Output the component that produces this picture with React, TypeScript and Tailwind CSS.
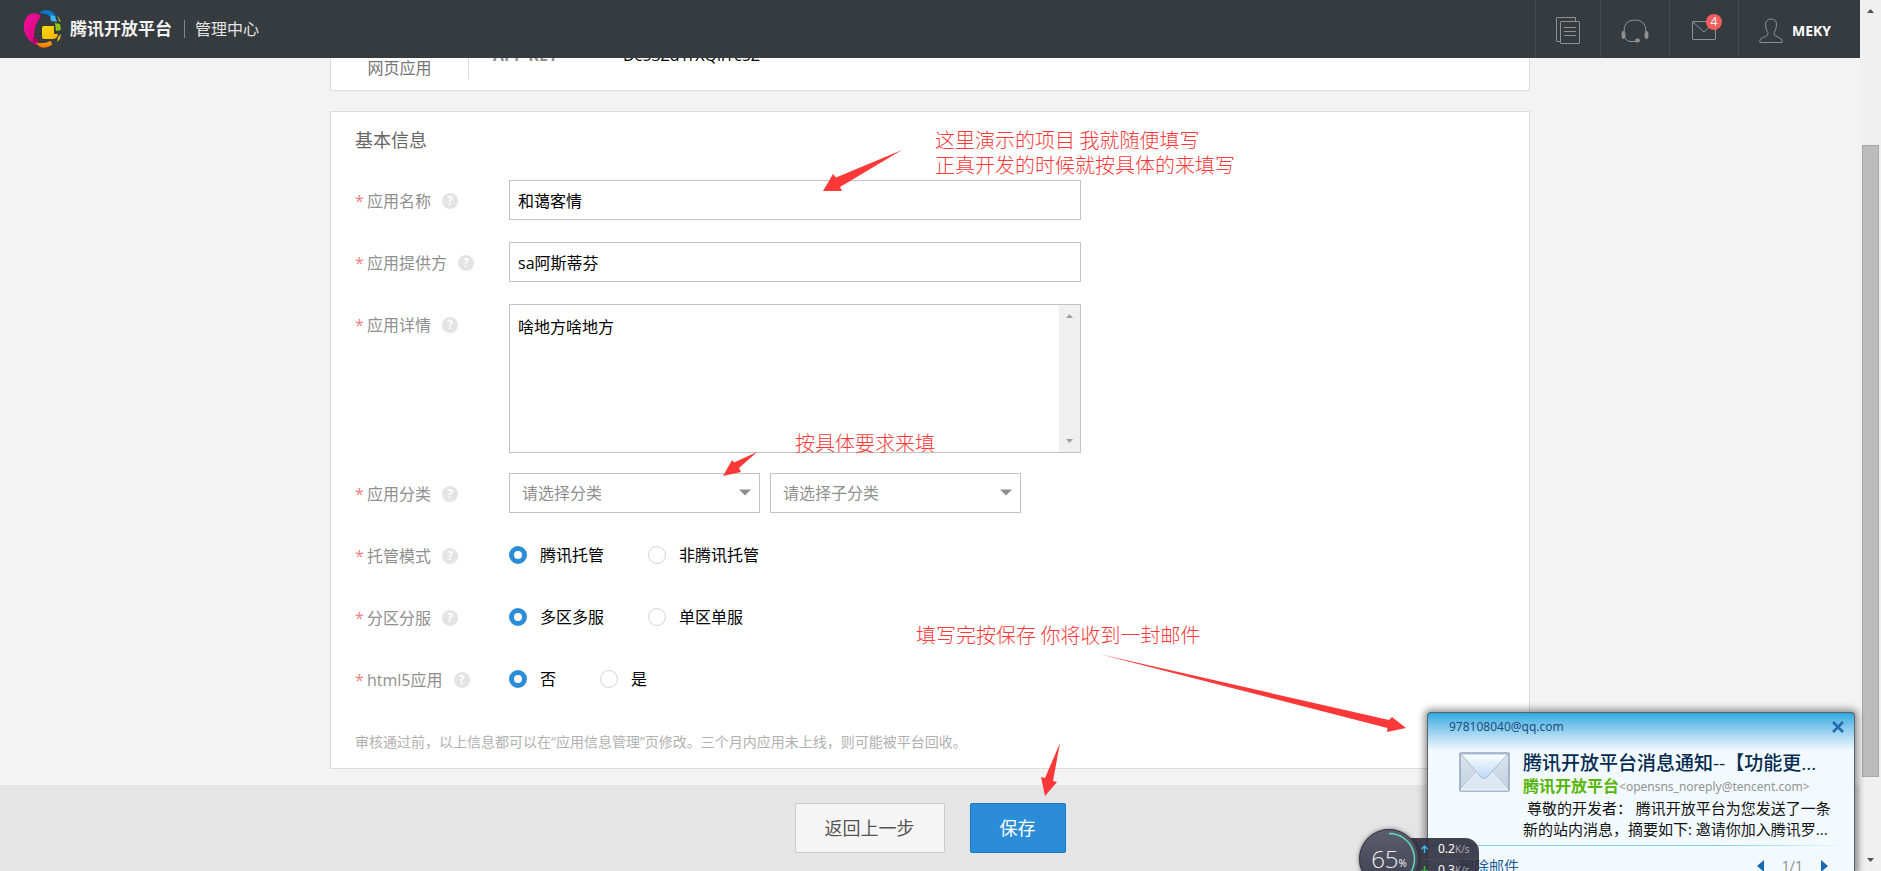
import React from "react";

const FONT = "font-['Open_Sans','Noto_Sans_CJK_SC',sans-serif]";

function Logo() {
  return (
    <svg className="h-10 w-10 shrink-0" viewBox="0 0 40 40" aria-hidden="true">
      <defs>
        <linearGradient id="pink" x1="0" y1="0" x2="1" y2="1">
          <stop offset="0" stopColor="#f0109a" />
          <stop offset="1" stopColor="#d8007f" />
        </linearGradient>
        <linearGradient id="gold" x1="0" y1="0" x2="1" y2="1">
          <stop offset="0" stopColor="#ffdb00" />
          <stop offset="1" stopColor="#f9b100" />
        </linearGradient>
        <linearGradient id="amber" x1="0" y1="0" x2="0" y2="1">
          <stop offset="0" stopColor="#ffae0a" />
          <stop offset="1" stopColor="#ee6d00" />
        </linearGradient>
      </defs>
      <path d="M13 4.500L17 7Q10 15 10 29L15 34L12 36Q2 31 0 21Q-1 10 6 5Q10 4 13 4.500Z" fill="url(#pink)" />
      <path d="M9 28L16 31L9 35Z" fill="#a5005c" />
      <path d="M15 4Q22-2 30 4L32 8L26 7Q21 4 15 4Z" fill="#0878ce" />
      <path d="M26 6L31 7L33 13L27 12Z" fill="#3fb2f2" />
      <path d="M33 6L37 13L35 12Z" fill="#d3d321" />
      <path d="M31 14L36 15L37 21L32 22Z" fill="#8cc914" />
      <path d="M18 19Q18 17 20 17L30 17V25H34Q33 30 29 30L20 30Q18 30 18 28Z" fill="url(#gold)" />
      <path d="M34 28L37 25L36 30L33 33Z" fill="#d7c51e" />
      <path d="M12 34Q20 35 27 32L28 36Q22 40 16 38Z" fill="url(#amber)" />
    </svg>
  );
}

function Help() {
  return (
    <button type="button" aria-label="帮助" className="flex h-4 w-4 shrink-0 items-center justify-center rounded-full bg-[#e4e4e4] text-xs leading-4 font-bold text-white">
      ?
    </button>
  );
}

function Row({ label, id, top, children }: { label: string; id: string; top?: boolean; children: React.ReactNode }) {
  return (
    <div className={top ? "flex items-start" : "flex items-center"}>
      <div className="flex h-10 w-[154px] shrink-0 items-center pt-0.5">
        <span className="w-3 text-base text-[#f0807e]">*</span>
        <label id={`${id}-label`} htmlFor={id} className="mr-[11px] text-base text-[#8f8f8f]">{label}</label>
        <Help />
      </div>
      {children}
    </div>
  );
}

function Select({ id, text, label }: { id: string; text: string; label: string }) {
  return (
    <div className="relative w-[251px]">
      <select id={id} aria-label={label} className="h-10 w-full appearance-none border border-[#c3c3c3] bg-white px-3 text-base text-[#8f8f8f]">
        <option>{text}</option>
      </select>
      <svg className="pointer-events-none absolute top-4 right-[9px] h-[7px] w-3" viewBox="0 0 12 7" aria-hidden="true">
        <path d="M0 0.500H12L6 6.500Z" fill="#8f8f8f" />
      </svg>
    </div>
  );
}

function Radios({ name, options }: { name: string; options: string[] }) {
  return (
    <div role="radiogroup" aria-labelledby={`${name}-label`} className="flex h-10 items-center gap-11">
      {options.map((o, i) => (
        <label key={o} className="flex items-center gap-[13px] text-base text-black">
          <input
            id={i === 0 ? name : undefined}
            type="radio"
            name={name}
            defaultChecked={i === 0}
            className="h-[18px] w-[18px] appearance-none rounded-full border border-[#d4d4d4] bg-white checked:border-5 checked:border-[#2b8dd8]"
          />
          {o}
        </label>
      ))}
    </div>
  );
}

function Triangle({ up, color }: { up?: boolean; color: string }) {
  return (
    <svg className="h-1 w-[7px]" viewBox="0 0 7 4" aria-hidden="true">
      <path d={up ? "M0 4L3.500 0L7 4Z" : "M0 0L3.500 4L7 0Z"} fill={color} />
    </svg>
  );
}

function Header() {
  const cell = "flex h-full items-center border-l border-[#484c4f]";
  return (
    <header className="relative z-10 flex h-[58px] shrink-0 items-center justify-between bg-[#363b3f]">
      <div className="flex items-center pl-6">
        <Logo />
        <a href="#" className="ml-1.5 text-[17px] leading-6 font-bold text-[#f2f2f2]">腾讯开放平台</a>
        <span className="ml-3 h-[18px] w-px bg-[#85888a]" />
        <a href="#" className="ml-2.5 text-base text-[#e4e4e4]">管理中心</a>
      </div>
      <nav className="flex h-full">
        <a href="#" aria-label="文档" className={`${cell} w-[65px] pl-5`}>
          <svg className="mt-1 h-7 w-6" viewBox="0 0 24 28" fill="none" stroke="#8f9193" aria-hidden="true">
            <path d="M4.500 24.500H1Q0.500 24.500 0.500 24V1Q0.500 0.500 1 0.500H19.500V4.500" />
            <rect x="4.500" y="4.500" width="19" height="22" rx="0.500" />
            <path d="M8 10.500H20M8 14.500H20M8 18.500H20" />
          </svg>
        </a>
        <a href="#" aria-label="客服" className={`${cell} w-[69px] pl-5`}>
          <svg className="mt-1 h-6 w-7" viewBox="0 0 28 24" fill="none" stroke="#8f9193" aria-hidden="true">
            <path d="M3 13Q2.500 1 14 1Q25 1 25 13" />
            <ellipse cx="2.500" cy="16" rx="2" ry="4" fill="#8f9193" stroke="none" />
            <ellipse cx="25.500" cy="16" rx="2" ry="4" fill="#8f9193" stroke="none" />
            <path d="M4 19Q6 22.500 9 22.500H15" />
            <ellipse cx="16.500" cy="21.500" rx="2.500" ry="2" fill="#8f9193" stroke="none" />
          </svg>
        </a>
        <a href="#" aria-label="消息" className={`${cell} relative w-[69px] pl-[22px]`}>
          <svg className="mt-1 h-5 w-6" viewBox="0 0 24 20" fill="none" stroke="#8f9193" aria-hidden="true">
            <rect x="0.500" y="0.500" width="23" height="18" rx="0.500" />
            <path d="M1 1L12 11L23 1" />
          </svg>
          <span className="absolute top-3.5 left-9 flex h-4 w-4 items-center justify-center rounded-full bg-[#f05e5e] text-xs leading-4 text-white">4</span>
        </a>
        <a href="#" className={`${cell} w-[122px] gap-[9px] pl-5 font-['Noto_Sans',sans-serif] text-sm font-bold text-white`}>
          <svg className="mt-1 h-[26px] w-6" viewBox="0 0 24 26" fill="none" stroke="#8f9193" aria-hidden="true">
            <path d="M9 16Q9 14.500 8 13Q6.500 10 6.500 6Q7 1 12 1Q17 1 17.500 6Q17.500 10 16 13Q15 14.500 15 16Q15.500 18 19 19Q23.500 20.500 23.500 24Q23.500 24.500 22 24.500H2Q0.500 24.500 0.500 24Q0.500 20.500 5 19Q8.500 18 9 16Z" />
          </svg>
          <span className="pt-1">MEKY</span>
        </a>
      </nav>
    </header>
  );
}

function Annotations() {
  const note = "absolute whitespace-nowrap text-xl leading-[25px] font-light text-[#fd3838]";
  return (
    <div className="pointer-events-none absolute inset-0 font-['Noto_Sans_CJK_SC',sans-serif]">
      <p className={`${note} top-[109px] left-[605px]`}>
        这里演示的项目 我就随便填写
        <br />
        正真开发的时候就按具体的来填写
      </p>
      <p className={`${note} top-[412px] left-[465px]`}>按具体要求来填</p>
      <p className={`${note} top-[604px] left-[586px]`}>填写完按保存 你将收到一封邮件</p>
      <svg className="absolute inset-0 h-full w-full overflow-visible" fill="#fd3838" aria-hidden="true">
        <path d="M572 132L506 159.500L503 156L493 173H512L510 169Z" />
        <path d="M427 434L404 444.500L402 442L393 458L411 454L409 450Z" />
        <path d="M769 636L1059 702L1062 699L1076 710L1057 714L1057.500 710Z" />
        <path d="M730 725L715 760L711 759L715 778L727 764L723 763Z" />
      </svg>
    </div>
  );
}

function MailPopup() {
  return (
    <aside className="absolute right-[26px] bottom-0 z-20 flex h-[159px] w-[428px] flex-col overflow-hidden rounded-t border border-b-0 border-[#5a6266] bg-[#f3faff] bg-linear-to-b from-[#25a9e0] to-[#f3faff] to-[38px] shadow-[0_0_7px_3px_rgba(0,0,0,0.4)]">
      <div className="flex h-7 shrink-0 items-center justify-between pr-2.5 pl-[21px]">
        <span className="font-['Noto_Sans',sans-serif] text-xs leading-4 text-[#1c4f7c]">978108040@qq.com</span>
        <button type="button" aria-label="关闭">
          <svg className="h-3 w-3" viewBox="0 0 12 12" stroke="#2468ad" strokeWidth="2.500" aria-hidden="true">
            <path d="M1 1L11 11M11 1L1 11" />
          </svg>
        </button>
      </div>
      <div className="flex h-[104px] shrink-0 gap-[13px] pt-[11px] pl-[31px]">
        <svg className="h-10 w-[51px] shrink-0" viewBox="0 0 51 40" aria-hidden="true">
          <defs>
            <linearGradient id="flap" x1="0" y1="0" x2="0" y2="1">
              <stop offset="0" stopColor="#fcfdff" />
              <stop offset="1" stopColor="#bcd8f4" />
            </linearGradient>
            <linearGradient id="env" x1="0" y1="0" x2="0" y2="1">
              <stop offset="0" stopColor="#dce5ef" />
              <stop offset="1" stopColor="#c1cfdf" />
            </linearGradient>
          </defs>
          <rect x="1" y="1" width="49" height="38" rx="1" fill="url(#env)" stroke="#90a4c0" strokeWidth="1.500" />
          <path d="M2 38L19 20L25 26L32 20L49 38Z" fill="#dce7f2" stroke="#f8fbff" />
          <path d="M2 2H49L28 25Q25 28 22 25Z" fill="url(#flap)" stroke="#aabbd0" />
        </svg>
        <div className="flex min-w-0 flex-1 flex-col text-[#111]">
          <h3 className="text-[19px] leading-[22px] font-medium whitespace-nowrap text-[#032b50]">腾讯开放平台消息通知--【功能更...</h3>
          <p className="flex h-6 items-center whitespace-nowrap">
            <span className="text-base leading-6 font-bold text-[#55b500]">腾讯开放平台</span>
            <span className="pt-0.5 font-['Noto_Sans',sans-serif] text-xs text-[#929292]">&lt;opensns_noreply@tencent.com&gt;</span>
          </p>
          <p className="text-[15px] leading-[21px] whitespace-nowrap">
            &nbsp;尊敬的开发者： 腾讯开放平台为您发送了一条
            <br />
            新的站内消息，摘要如下: 邀请你加入腾讯罗...
          </p>
        </div>
      </div>
      <div className="mr-3.5 h-px shrink-0 bg-linear-to-r from-[#7fcdec] from-70% to-[#e6f6fd]" />
      <div className="flex h-10 shrink-0 items-center justify-between pr-[26px] pl-[31px] text-[15px]">
        <a href="#" className="text-[#1b5a94]">删除邮件</a>
        <div className="flex items-center gap-[18px] text-sm text-[#8c8c8c]">
          <button type="button" aria-label="上一封">
            <svg className="h-3 w-[7px]" viewBox="0 0 7 12" aria-hidden="true"><path d="M7 0V12L0 6Z" fill="#1768b3" /></svg>
          </button>
          <span className="leading-4">1/1</span>
          <button type="button" aria-label="下一封">
            <svg className="h-3 w-[7px]" viewBox="0 0 7 12" aria-hidden="true"><path d="M0 0V12L7 6Z" fill="#1768b3" /></svg>
          </button>
        </div>
      </div>
    </aside>
  );
}

function SpeedWidget() {
  return (
    <div className="absolute right-[402px] -bottom-[18px] z-30 flex h-[60px] w-[120px] items-center font-['Noto_Sans',sans-serif]">
      <div className="absolute top-[9px] right-0 left-7 h-11 rounded-[14px] bg-[#2d2e3d]/90 pl-[34px] text-xs text-white">
        <p className="flex h-[22px] items-center gap-2.5 border-b border-[#484955] leading-4 whitespace-nowrap">
          <svg className="h-2 w-[7px]" viewBox="0 0 7 8" fill="none" stroke="#3bb6f5" strokeWidth="1.500" aria-hidden="true"><path d="M3.500 8V1M0.500 4L3.500 1L6.500 4" /></svg>
          <span>0.2<span className="text-[10px] text-[#a6a7b0]">K/s</span></span>
        </p>
        <p className="flex h-5 items-center gap-2.5 leading-4 whitespace-nowrap">
          <svg className="h-2 w-[7px]" viewBox="0 0 7 8" fill="none" stroke="#35c13a" strokeWidth="1.500" aria-hidden="true"><path d="M3.500 0V7M0.500 4L3.500 7L6.500 4" /></svg>
          <span>0.3<span className="text-[10px] text-[#a6a7b0]">K/s</span></span>
        </p>
      </div>
      <div className="relative flex h-[60px] w-[60px] items-center justify-center rounded-full bg-linear-to-b from-[#5d5f70] to-[#3c3e4c] text-[#eee] shadow-[0_0_4px_rgba(0,0,0,0.5)]">
        <svg className="absolute inset-0 h-full w-full" viewBox="0 0 60 60" fill="none" aria-hidden="true">
          <circle cx="30" cy="30" r="29.500" stroke="#34353f" />
          <path d="M30 4.500A25.500 25.500 0 0 1 47 49" stroke="#5fe0bd" strokeWidth="1.500" />
        </svg>
        <span className="font-['Open_Sans',sans-serif] text-2xl leading-6 font-light">65</span>
        <span className="mt-2 text-[10px] leading-3">%</span>
      </div>
    </div>
  );
}

export default function App() {
  return (
    <div className={`relative flex h-screen overflow-hidden bg-[#f3f3f3] ${FONT}`}>
      <div className="flex min-w-0 flex-1 flex-col">
        <Header />
        <main className="flex min-h-0 flex-1 flex-col">
          <div className="relative mx-auto -mt-10 w-full max-w-[1200px]">
            <section className="flex h-[73px] border border-[#dcdcdc] bg-white">
              <div className="mb-[11px] flex w-[138px] items-end justify-center border-r border-[#dcdcdc] text-base leading-[22px] text-[#757575]">网页应用</div>
              <div className="flex items-start pt-6 pl-6 text-base leading-6">
                <strong className="w-[130px] text-[#8f8f8f]">APP KEY</strong>
                <span className="text-black">Dc53Zd1rXQirrc5Z</span>
              </div>
            </section>
            <section className="mt-5 border border-[#dcdcdc] bg-white pl-6">
              <h2 className="mt-3.5 text-lg leading-7 text-[#666]">基本信息</h2>
              <form className="mt-[26px]">
                <div className="flex flex-col gap-[22px]">
                  <Row label="应用名称" id="app-name">
                    <input id="app-name" defaultValue="和蔼客情" className="h-10 w-[572px] border border-[#c3c3c3] px-2 text-base text-black" />
                  </Row>
                  <Row label="应用提供方" id="provider">
                    <input id="provider" defaultValue="sa阿斯蒂芬" className="h-10 w-[572px] border border-[#c3c3c3] px-2 text-base text-black" />
                  </Row>
                  <Row label="应用详情" id="detail" top>
                    <div className="flex h-[149px] w-[572px] border border-[#c3c3c3]">
                      <textarea id="detail" defaultValue="啥地方啥地方" className="flex-1 resize-none px-2 py-2.5 text-base text-black" />
                      <div className="flex w-[21px] flex-col items-center justify-between bg-[#f0f0f0] py-[9px]">
                        <Triangle up color="#a0a0a0" />
                        <Triangle color="#a0a0a0" />
                      </div>
                    </div>
                  </Row>
                </div>
                <div className="mt-5 flex flex-col gap-[22px]">
                  <Row label="应用分类" id="category">
                    <div className="flex gap-2.5">
                      <Select id="category" label="应用分类" text="请选择分类" />
                      <Select id="subcategory" label="子分类" text="请选择子分类" />
                    </div>
                  </Row>
                  <Row label="托管模式" id="hosting"><Radios name="hosting" options={["腾讯托管", "非腾讯托管"]} /></Row>
                  <Row label="分区分服" id="zone"><Radios name="zone" options={["多区多服", "单区单服"]} /></Row>
                  <Row label="html5应用" id="html5"><Radios name="html5" options={["否", "是"]} /></Row>
                </div>
              </form>
              <p className="mt-[33px] mb-4 text-sm leading-5 text-[#b0b0b0]">审核通过前，以上信息都可以在“应用信息管理”页修改。三个月内应用未上线，则可能被平台回收。</p>
            </section>
            <Annotations />
          </div>
        </main>
        <footer className="flex h-[86px] shrink-0 items-start justify-center gap-[25px] bg-[#e5e5e5] pt-[18px]">
          <button type="button" className="h-[50px] rounded-xs border border-[#cacaca] bg-[#f5f5f5] px-[29px] text-lg text-[#555]">返回上一步</button>
          <button type="button" className="h-[50px] rounded-xs border border-[#1278c8] bg-[#2b8dd8] px-[29px] text-lg text-white">保存</button>
        </footer>
      </div>
      <div className="flex w-[21px] shrink-0 flex-col items-center bg-[#f0f0f0] py-[9px]">
        <Triangle up color="#505050" />
        <div className="mt-[132px] mb-[81px] w-[17px] flex-1 border border-[#a8a8a8] bg-[#bcbcbc]" />
        <Triangle color="#505050" />
      </div>
      <MailPopup />
      <SpeedWidget />
    </div>
  );
}
